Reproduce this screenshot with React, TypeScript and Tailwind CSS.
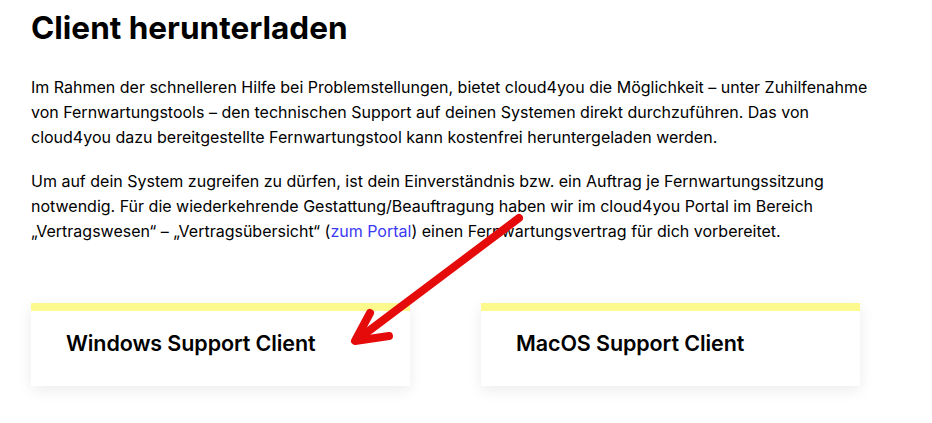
const FONT = "font-['Inter','Liberation_Sans',sans-serif]"

type ClientCardProps = {
  title: string
}

function ClientCard({ title }: ClientCardProps) {
  return (
    <div className="w-[379px] bg-white shadow-[0_4px_14px_rgba(0,0,0,0.08)]">
      <div className="h-[8px] bg-[#fcfa8c]" />
      <div className="px-[35px] pb-[29px] pt-[18px]">
        <h3 className="text-[21.5px] font-semibold leading-[28px] tracking-[-0.1px] text-black">{title}</h3>
      </div>
    </div>
  )
}

function Arrow() {
  return (
    <svg
      className="pointer-events-none absolute left-0 top-0"
      width="932"
      height="423"
      viewBox="0 0 932 423"
    >
      <g stroke="#e60b0b" strokeWidth="8" strokeLinecap="round" strokeLinejoin="round" fill="none">
        <path d="M519 218 L358 339" />
        <path d="M370 313 L355 341 L389 336" />
      </g>
    </svg>
  )
}

export default function App() {
  return (
    <div className={`relative min-h-[423px] w-[932px] bg-white ${FONT} text-black`}>
      <div className="px-[31px] pt-[8px]">
        <h1 className="text-[31.5px] font-bold leading-[40px]">Client herunterladen</h1>
        <div className="mt-[27px] w-[848px] space-y-[19px] text-[16px] leading-[25px]">
          <p>
            Im Rahmen der schnelleren Hilfe bei Problemstellungen, bietet cloud4you die Möglichkeit – unter
            Zuhilfenahme von Fernwartungstools – den technischen Support auf deinen Systemen direkt
            durchzuführen. Das von cloud4you dazu bereitgestellte Fernwartungstool kann kostenfrei
            heruntergeladen werden.
          </p>
          <p>
            Um auf dein System zugreifen zu dürfen, ist dein Einverständnis bzw. ein Auftrag je
            Fernwartungssitzung notwendig. Für die wiederkehrende Gestattung/Beauftragung haben wir im
            cloud4you Portal im Bereich „Vertragswesen“ – „Vertragsübersicht“ (
            <a className="text-[#3a3af5]">zum Portal</a>) einen Fernwartungsvertrag für dich vorbereitet.
          </p>
        </div>
        <div className="mt-[59px] flex gap-[71px]">
          <ClientCard title="Windows Support Client" />
          <ClientCard title="MacOS Support Client" />
        </div>
      </div>
      <Arrow />
    </div>
  )
}
